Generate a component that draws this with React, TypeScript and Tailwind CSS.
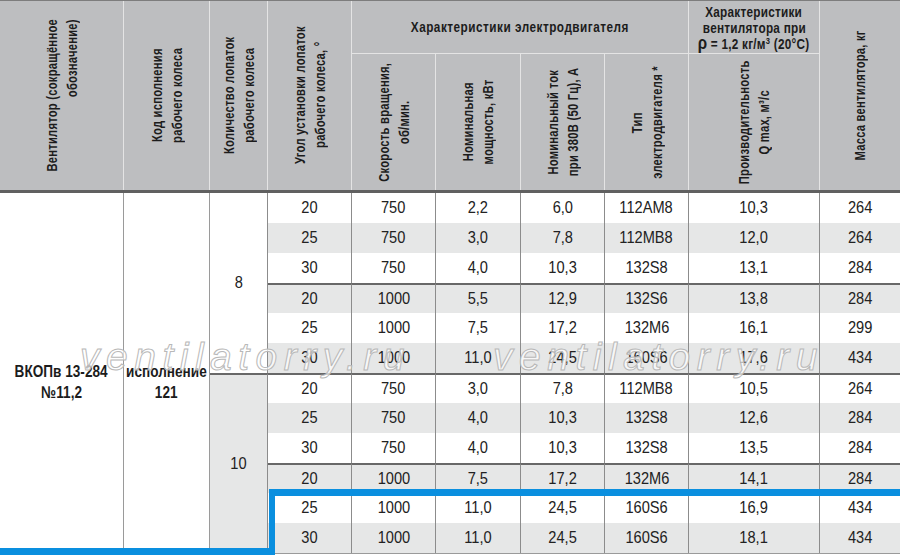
const rows = [
  ["20", "750", "2,2", "6,0", "112AM8", "10,3", "264"],
  ["25", "750", "3,0", "7,8", "112MB8", "12,0", "264"],
  ["30", "750", "4,0", "10,3", "132S8", "13,1", "284"],
  ["20", "1000", "5,5", "12,9", "132S6", "13,8", "284"],
  ["25", "1000", "7,5", "17,2", "132M6", "16,1", "299"],
  ["30", "1000", "11,0", "24,5", "160S6", "17,6", "434"],
  ["20", "750", "3,0", "7,8", "112MB8", "10,5", "264"],
  ["25", "750", "4,0", "10,3", "132S8", "12,6", "284"],
  ["30", "750", "4,0", "10,3", "132S8", "13,5", "284"],
  ["20", "1000", "7,5", "17,2", "132M6", "14,1", "284"],
  ["25", "1000", "11,0", "24,5", "160S6", "16,9", "434"],
  ["30", "1000", "11,0", "24,5", "160S6", "18,1", "434"],
];

const cols =
  "grid grid-cols-[124px_86px_58px_84px_84px_85px_84px_84px_131px_80px]";

// condensed look: Arial metrics squeezed along the line
function VHead({ lines, end }: { lines: string[]; end?: boolean }) {
  return (
    <div
      className={`rotate-180 scale-y-[0.8] [writing-mode:vertical-rl] text-[14px] leading-[20px] font-bold tracking-[0.3px] whitespace-nowrap ${
        end ? "text-end" : "text-center"
      }`}
    >
      {lines.map((l, i) => (
        <div key={i}>{l}</div>
      ))}
    </div>
  );
}

function Sq({ children, k = "scale-x-[0.84]" }: { children: React.ReactNode; k?: string }) {
  return <span className={`inline-block whitespace-nowrap ${k}`}>{children}</span>;
}

const hcell =
  "flex items-center justify-center border-r border-[#e4e4e4] bg-[#bdbec0]";

function Header() {
  return (
    <div
      className={`${cols} grid-rows-[53px_136px] border-t border-b-[3px] border-t-[#7d7d7d] border-b-[#606060] text-[#1c1c1c]`}
    >
      <div className={`${hcell} row-span-2`}>
        <VHead lines={["Вентилятор (сокращённое", "обозначение)"]} end />
      </div>
      <div className={`${hcell} row-span-2`}>
        <VHead lines={["Код исполнения", "рабочего колеса"]} />
      </div>
      <div className={`${hcell} row-span-2`}>
        <VHead lines={["Количество лопаток", "рабочего колеса"]} />
      </div>
      <div className={`${hcell} row-span-2`}>
        <VHead lines={["Угол установки лопаток", "рабочего колеса, °"]} />
      </div>
      <div
        className={`${hcell} col-span-4 border-b text-[14px] font-bold tracking-[0.6px]`}
      >
        <Sq>Характеристики электродвигателя</Sq>
      </div>
      <div
        className={`${hcell} flex-col border-b pt-[1px] text-center text-[14px] leading-[16px] font-bold tracking-[0.3px]`}
      >
        <Sq>Характеристики</Sq>
        <Sq>вентилятора при</Sq>
        <Sq>
          <span className="text-[18px] leading-[14px]">ρ</span> = 1,2 кг/м
          <sup className="text-[9px]">3</sup> (20°C)
        </Sq>
      </div>
      <div className={`${hcell} row-span-2 border-r-0`}>
        <VHead lines={["Масса вентилятора, кг"]} />
      </div>
      <div className={hcell}>
        <VHead lines={["Скорость вращения,", "об/мин."]} />
      </div>
      <div className={hcell}>
        <VHead lines={["Номинальная", "мощность, кВт"]} />
      </div>
      <div className={hcell}>
        <VHead lines={["Номинальный ток", "при 380В (50 Гц), А"]} />
      </div>
      <div className={hcell}>
        <VHead lines={["Тип", "электродвигателя *"]} />
      </div>
      <div className={hcell}>
        <VHead lines={["Производительность", "Q max, м³/с"]} />
      </div>
    </div>
  );
}

function Body() {
  return (
    <div
      className={`${cols} grid-rows-[repeat(12,30px)] border-b border-[#9a9a9a] text-[17px] text-[#222]`}
    >
      <div className="col-start-1 row-start-1 row-span-12 flex flex-col items-center justify-center border-r border-[#9a9a9a] bg-white pt-[18px] text-center text-[17px] leading-[21px] font-bold text-[#1c1c1c]">
        <Sq k="scale-x-[0.8]">ВКОПв 13-284</Sq>
        <Sq k="scale-x-[0.8]">№11,2</Sq>
      </div>
      <div className="col-start-2 row-start-1 row-span-12 flex flex-col items-center justify-center border-r border-[#9a9a9a] bg-white pt-[18px] text-center text-[17px] leading-[21px] font-bold text-[#1c1c1c]">
        <Sq k="scale-x-[0.8]">исполнение</Sq>
        <Sq k="scale-x-[0.8]">121</Sq>
      </div>
      <div className="col-start-3 row-start-1 row-span-6 flex items-center justify-center border-r border-[#8c8c8c] bg-white">
        <Sq k="scale-x-[0.86]">8</Sq>
      </div>
      <div className="col-start-3 row-start-7 row-span-6 flex items-center justify-center border-t-2 border-r border-t-[#686868] border-r-[#8c8c8c] bg-[#e6e7e7]">
        <Sq k="scale-x-[0.86]">10</Sq>
      </div>
      {rows.map((r, i) =>
        r.map((v, j) => (
          <div
            key={`${i}-${j}`}
            className={`flex items-center justify-center ${
              j < 6 ? "border-r border-r-[#8c8c8c]" : ""
            } ${i % 2 === 1 ? "bg-[#e6e7e7]" : "bg-white"} ${
              i === 3 || i === 6 || i === 9
                ? "border-t-2 border-t-[#686868]"
                : ""
            }`}
          >
            <Sq k="scale-x-[0.86]">{v}</Sq>
          </div>
        ))
      )}
    </div>
  );
}

export default function App() {
  return (
    <div className="relative h-[555px] w-[900px] overflow-hidden bg-white font-['Liberation_Sans',Arial,sans-serif]">
      <Header />
      <Body />
      {/* watermark */}
      <div className="pointer-events-none absolute top-[333px] left-[80px] text-[39px] leading-[48px] italic tracking-[6.5px] text-white/70 [-webkit-text-stroke:1px_#b8b8b8]">
        ventilatorry.ru
      </div>
      <div className="pointer-events-none absolute top-[333px] left-[493px] text-[39px] leading-[48px] italic tracking-[6.5px] text-white/70 [-webkit-text-stroke:1px_#b8b8b8]">
        ventilatorry.ru
      </div>
      {/* highlight frame */}
      <div className="absolute top-[489px] left-[269px] h-[7px] w-[631px] bg-[#0a8fdf]" />
      <div className="absolute top-[489px] left-[269px] h-[66px] w-[6px] bg-[#0a8fdf]" />
      <div className="absolute top-[548px] left-0 h-[7px] w-[275px] bg-[#0a8fdf]" />
    </div>
  );
}
